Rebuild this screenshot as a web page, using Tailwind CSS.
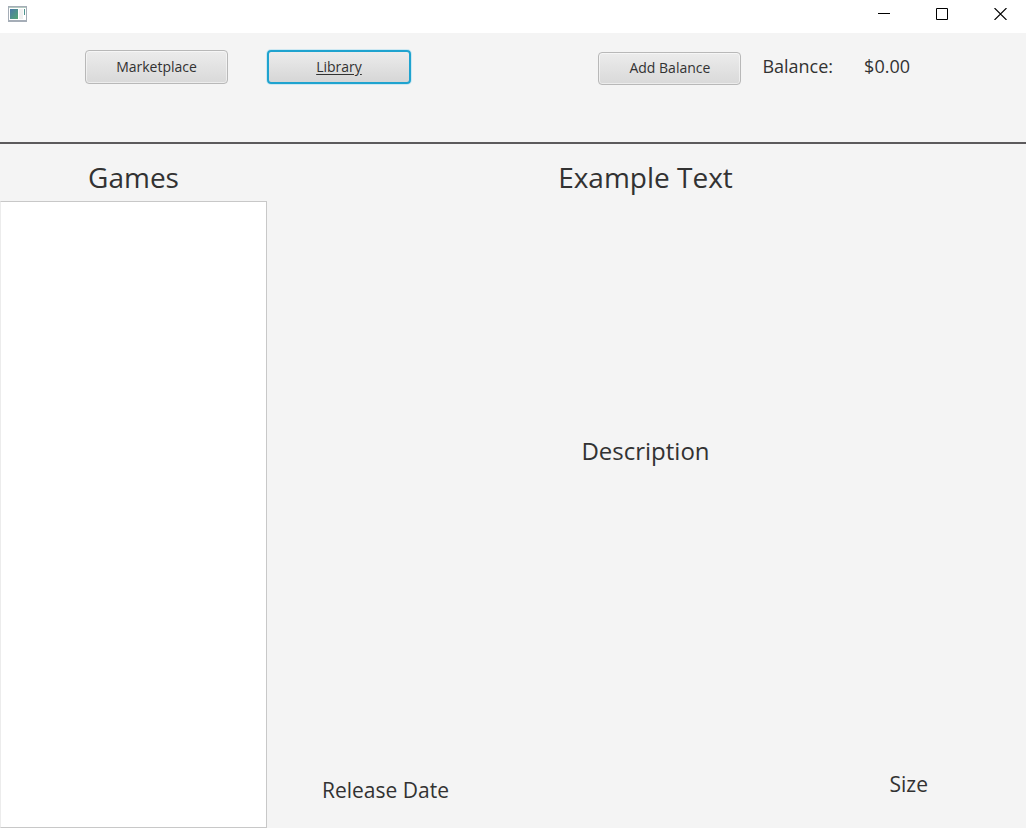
<!DOCTYPE html>
<html lang="en">
<head>
<meta charset="utf-8">
<meta name="viewport" content="width=device-width, initial-scale=1">
<title>Library</title>
<script src="https://cdn.jsdelivr.net/npm/@tailwindcss/browser@4"></script>
</head>
<body class="flex min-h-screen flex-col bg-[#f4f4f4] font-['Open_Sans','Noto_Sans',sans-serif] text-[#323232]">
  <div class="flex h-[33px] shrink-0 items-start justify-between bg-white">
    <svg class="mt-[6px] ml-2" width="19" height="16" viewBox="0 0 19 16" aria-hidden="true">
      <defs><linearGradient id="pane" x1="0" y1="0" x2="1" y2="1"><stop offset="0" stop-color="#4a78a8"/><stop offset="1" stop-color="#52a672"/></linearGradient></defs>
      <rect width="19" height="16" fill="#a5adb7"/>
      <rect x="1" y="1" width="17" height="1" fill="#b3c9bf"/>
      <rect x="1" y="2" width="17" height="12" fill="#fff"/>
      <rect x="2" y="3" width="8" height="10" fill="url(#pane)"/>
      <rect x="11" y="3" width="4" height="10" fill="#f0f0f0"/>
      <rect x="16" y="3" width="1" height="6" fill="#4f9590"/>
    </svg>
    <div class="flex h-7">
      <button type="button" aria-label="Minimize" class="flex w-[58px] items-center justify-center"><svg width="12" height="12" viewBox="0 0 12 12" shape-rendering="crispEdges"><path d="M0 5h12v1H0z"/></svg></button>
      <button type="button" aria-label="Maximize" class="flex w-[58px] items-center justify-center"><svg width="12" height="12" viewBox="0 0 12 12" fill="none" stroke="#000"><path d="M.5 .5h11v11H.5z"/></svg></button>
      <button type="button" aria-label="Close" class="flex w-[55px] items-center justify-center pl-1"><svg width="13" height="12" viewBox="0 0 13 12" fill="none" stroke="#000" stroke-width="1.1"><path d="M.5 0l12 12M12.500 0L.5 12"/></svg></button>
    </div>
  </div>

  <header class="flex h-[111px] shrink-0 items-start justify-between border-b-2 border-[#5c5a5c] pt-[17px] pr-[116px] pl-[85px]">
    <nav class="flex gap-[39px]">
      <button type="button" class="h-[34px] w-[143px] rounded-[4px] border border-[#b8b8b8] bg-linear-to-b from-[#ececec] to-[#d9d9d9] pb-px text-sm leading-5 shadow-[inset_0_0_0_1px_#ffffff80]">Marketplace</button>
      <button type="button" class="h-[34px] w-36 rounded-[4px] border-2 border-[#1fa3cf] bg-linear-to-b from-[#ececec] to-[#d6d6d6] pb-px text-sm leading-5 underline underline-offset-2 shadow-[0_0_0_1px_#cde8f2]">Library</button>
    </nav>
    <div class="flex items-start">
      <button type="button" class="mt-[2px] h-[33px] w-[143px] rounded-[4px] border border-[#b8b8b8] bg-linear-to-b from-[#ececec] to-[#d9d9d9] pb-[2px] text-sm leading-5 shadow-[inset_0_0_0_1px_#ffffff80]">Add Balance</button>
      <span class="ml-[21px] text-lg leading-8">Balance:</span>
      <span class="ml-[31px] text-lg leading-8">$0.00</span>
    </div>
  </header>

  <div class="flex grow">
    <aside class="flex w-[267px] shrink-0 flex-col">
      <h2 class="flex h-[57px] items-center justify-center pt-2 text-[28px] leading-10">Games</h2>
      <ul aria-label="Games" class="grow border border-t-[#c8c8c8] border-r-[#c8c8c8] border-b-[#c8c8c8] border-l-[#ececec] bg-white"></ul>
    </aside>
    <main class="flex grow flex-col">
      <h1 class="flex h-[57px] items-center justify-center pt-2 pr-[2px] text-[28px] leading-10">Example Text</h1>
      <div class="flex grow items-center justify-center pr-[2px] pb-[68px] text-2xl leading-8">Description</div>
      <div class="flex items-start justify-between pr-[98px] pb-[22px] pl-[55px] text-[21px] leading-8">
        <span class="mt-[6px]">Release Date</span>
        <span>Size</span>
      </div>
    </main>
  </div>
</body>
</html>
